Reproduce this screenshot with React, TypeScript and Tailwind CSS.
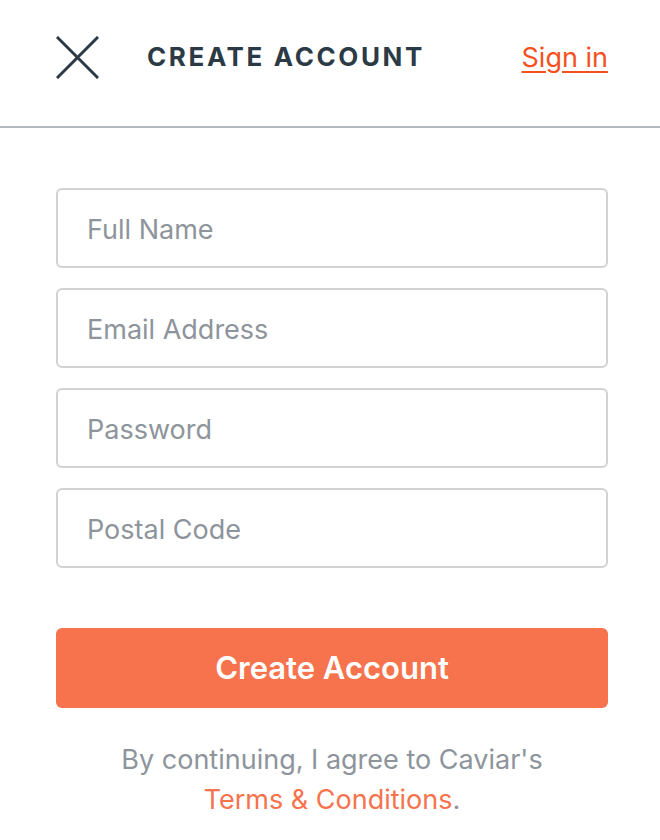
import React from 'react';

const fields = ['Full Name', 'Email Address', 'Password', 'Postal Code'];

export default function App() {
  return (
    <div className="w-[660px] h-[840px] bg-white overflow-hidden" style={{ fontFamily: 'Inter, "Liberation Sans", sans-serif' }}>
      {/* header */}
      <div className="h-[128px] border-b-2 border-[#b3bbc1] flex items-center pl-[56px] pr-[52px] pb-[12px]">
        <button className="w-[43px] h-[43px] shrink-0 text-[#2c3a45]">
          <svg viewBox="0 0 43 43" width="43" height="43" fill="none" stroke="currentColor" strokeWidth="3" strokeLinecap="square">
            <path d="M2 2L41 41M41 2L2 41" />
          </svg>
        </button>
        <h1 className="ml-[48px] text-[26px] font-bold tracking-[0.1em] text-[#2c3a45] leading-none">CREATE ACCOUNT</h1>
        <a href="#" className="ml-auto text-[27px] text-[#f4511e] underline underline-offset-4 decoration-2 leading-none">Sign in</a>
      </div>

      {/* form */}
      <div className="pl-[56px] pr-[52px] pt-[60px]">
        <div className="flex flex-col gap-[20px]">
          {fields.map((f) => (
            <input
              key={f}
              placeholder={f}
              type={f === 'Password' ? 'password' : 'text'}
              className="h-[80px] w-full rounded-[6px] border-2 border-[#d2d2d2] px-[29px] pt-[2px] text-[27px] text-[#2c3a45] placeholder:text-[#8d949b] outline-none"
            />
          ))}
        </div>
        <button className="mt-[60px] h-[80px] w-full rounded-[6px] bg-[#f6734d] text-white text-[31px] font-semibold">
          Create Account
        </button>
        <p className="mt-[32px] text-center text-[27px] leading-[40px] text-[#8d949b]">
          By continuing, I agree to Caviar's
          <br />
          <a href="#" className="text-[#f6734d]">Terms &amp; Conditions</a>.
        </p>
      </div>
    </div>
  );
}
